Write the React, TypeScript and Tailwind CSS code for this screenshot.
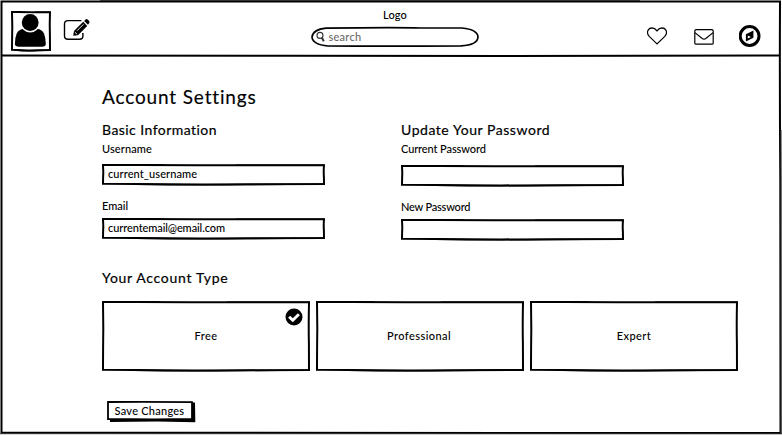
import React from "react";

type FrameProps = { w: number; h: number };

// Hand-drawn rectangle: slightly uneven strokes with short second passes on the long sides.
function SketchFrame({ w, h }: FrameProps) {
  const l = 1;
  const r = w - 1;
  const b = h - 1;
  return (
    <svg className="pointer-events-none absolute inset-0 h-full w-full overflow-visible" viewBox={`0 0 ${w} ${h}`} fill="none" stroke="#000">
      <path d={`M${l} 1 Q${w * 0.3} 0.8 ${w * 0.5} 1.3 L${r} 1.2 Q${r - 0.5} ${h * 0.35} ${r - 0.1} ${h * 0.6} L${r} ${b} Q${w * 0.7} ${b + 0.1} ${w * 0.45} ${b + 0.4} L${l} ${b - 0.2} Q${l + 0.1} ${h * 0.6} ${l + 0.3} ${h * 0.4} L${l} 1Z`} strokeWidth={2} />
      <path d={`M${l - 0.8} 0.8 L${w * 0.28} 0.9 M${w * 0.6} 1.3 L${r + 0.6} 1.2 M${w * 0.15} ${b + 0.2} Q${w * 0.4} ${b + 1.1} ${w * 0.65} ${b + 0.5} L${r + 0.5} ${b}`} strokeWidth={1.5} />
    </svg>
  );
}

function Field({ label, value, labelClass, valueClass = "", gap }: { label: string; value?: string; labelClass: string; valueClass?: string; gap: string }) {
  return (
    <label className={`flex flex-col ${gap}`}>
      <span className={`h-[14px] text-[11px] leading-[14px] whitespace-nowrap ${labelClass}`}>{label}</span>
      <span className="relative flex h-[21px] w-[223px] items-center pl-[6px] text-[11px]">
        <SketchFrame w={223} h={21} />
        {value && <span className={`relative -top-px leading-[14px] ${valueClass}`}>{value}</span>}
      </span>
    </label>
  );
}

function Plan({ name, selected, tracking }: { name: string; selected?: boolean; tracking: string }) {
  return (
    <div className="relative flex h-[70px] w-[208px] items-center justify-center text-[11px]">
      <SketchFrame w={208} h={70} />
      <span className={tracking}>{name}</span>
      {selected && (
        <svg className="absolute top-[7px] right-[7px] h-[18px] w-[18px]" viewBox="0 0 18 18">
          <circle cx="9" cy="9" r="8.5" fill="#000" />
          <path d="M4.1 8.7 7.8 12.3 13.9 6.2" fill="none" stroke="#fff" strokeWidth="2.9" />
        </svg>
      )}
    </div>
  );
}

function Header() {
  return (
    <header className="relative flex h-[57px] w-full">
      <div className="flex w-[300px] gap-[12px] pt-[11px] pl-[11px]">
        <div className="relative h-[40px] w-[40px]">
          <SketchFrame w={40} h={40} />
          <svg className="relative h-[40px] w-[40px]" viewBox="0 0 40 40">
            <path d="M12.5 18 Q8 18 5.7 22.5 Q3.8 27 3.9 33 Q4 35.8 8 35.8 H31 Q34.7 35.8 34.8 33 Q34.8 27 33 22.5 Q30.5 18 26.5 18Z" />
            <ellipse cx="19.2" cy="12" rx="9.6" ry="9.5" fill="#fff" />
            <ellipse cx="19.2" cy="11.6" rx="8.4" ry="8.5" />
          </svg>
        </div>
        <svg className="mt-[7px] h-[24px] w-[28px]" viewBox="0 0 28 24" fill="none" stroke="#000">
          <path d="M18.4 2.6 H5 Q1.5 2.6 1.5 6 V18 Q1.5 21.2 5 21.2 H16.5 Q19.9 21.2 19.9 18 V15" strokeWidth="1.4" />
          <path d="M10.2 17.8 11 13 20.2 3.8 24.2 7.9 15 17.2Z M21.1 3 22.9 1.3 Q23.8.7 24.6 1.4 L26.2 3 Q27 4 26.2 5 L25 6.8Z" fill="#000" stroke="none" />
          <path d="M14 12.8 20.4 6.4 M11.8 14.1 14.2 16.4" stroke="#fff" strokeWidth=".9" />
        </svg>
      </div>
      <div className="flex w-[190px] flex-col items-center pt-[8px]">
        <span className="h-[14px] text-[11px] leading-[14px] tracking-[0.15px]">Logo</span>
        <div className="relative mt-[5px] flex h-[20px] w-[169px] items-center pl-[5px]">
          <svg className="absolute inset-0 h-full w-full overflow-visible" viewBox="0 0 169 20" fill="none" stroke="#000">
            <path d="M15 1.2 Q80 .3 110 1 L151 1 Q166.5 2.5 167 10 Q166.5 18 150 18.9 Q80 19.4 17 19 Q1.5 17.5 1 10 Q2 2.5 15 1.2Z" strokeWidth="1.7" />
          </svg>
          <svg className="relative h-[12px] w-[11px]" viewBox="0 0 11 12" fill="none" stroke="#333">
            <circle cx="4" cy="4.4" r="3" strokeWidth="1.1" />
            <path d="M5.9 6.8 7.8 10.2" strokeWidth="2" />
          </svg>
          <span className="relative ml-[2px] text-[11px] leading-[14px] tracking-[0.25px] text-[#6b6b6b]">search</span>
        </div>
      </div>
      <div className="flex flex-1 items-center justify-end gap-[27px] pt-[15px] pr-[21px]">
        <svg className="h-[18px] w-[20px]" viewBox="0 0 20 18" fill="none" stroke="#000" strokeWidth="1.2">
          <path d="M10 16.9 2.2 9.4 Q-.2 6.8 .8 3.8 Q2 1 5 .9 Q7.8.9 10 3.9 Q12.2.9 15 .9 Q18 1 19.2 3.8 Q20.2 6.8 17.8 9.4Z" />
        </svg>
        <svg className="mr-px h-[17px] w-[20px]" viewBox="0 0 20 17" fill="none" stroke="#000" strokeWidth="1.2">
          <rect x=".8" y="1.6" width="18.4" height="14.6" rx="1.3" />
          <path d="M.9 4.6 8.2 10.4 Q10 11.7 11.8 10.4 L19.1 4.6" />
        </svg>
        <svg className="-ml-[3px] h-[22px] w-[22px]" viewBox="0 0 22 22">
          <circle cx="10.6" cy="11" r="9.4" fill="none" stroke="#000" strokeWidth="3" />
          <path d="M6.9 9.2 14.4 5.4 V12.7 L6.9 16.5Z M8.8 10.5 V13.6 L12 11.9Z" fillRule="evenodd" />
        </svg>
      </div>
      <svg className="absolute inset-x-0 bottom-0 h-[2px] w-full overflow-visible" viewBox="0 0 782 2" fill="none" stroke="#000">
        <path d="M2 .4 L290 .8 510 .9 780 .4" strokeWidth="2" />
      </svg>
    </header>
  );
}

export default function App() {
  return (
    <div className="relative h-[435px] w-[782px] overflow-hidden bg-white font-['Lato','Liberation_Sans',sans-serif] font-medium text-black">
      <Header />
      <main className="flex flex-col pt-[28px] pl-[102px]">
        <h1 className="h-[24px] text-[19px] leading-[24px] font-normal tracking-[0.85px] [-webkit-text-stroke:0.15px_#000]">Account Settings</h1>
        <div className="mt-[13px] flex gap-[76px]">
          <section className="flex w-[223px] flex-col">
            <h2 className="h-[18px] text-[14px] leading-[16px] font-normal tracking-[0.45px] [-webkit-text-stroke:0.2px_#000]">Basic Information</h2>
            <div className="mt-[2px] flex flex-col gap-[14px]">
              <Field label="Username" value="current_username" labelClass="tracking-[0.1px]" valueClass="tracking-[0.1px]" gap="gap-[8px]" />
              <Field label="Email" value="currentemail@email.com" labelClass="tracking-[0px]" valueClass="tracking-[-0.09px]" gap="gap-[5px]" />
            </div>
          </section>
          <section className="flex w-[223px] flex-col">
            <h2 className="h-[18px] text-[14px] leading-[16px] font-normal tracking-[0.55px] [-webkit-text-stroke:0.2px_#000]">Update Your Password</h2>
            <div className="mt-[2px] flex flex-col">
              <Field label="Current Password" labelClass="tracking-[-0.1px]" gap="gap-[8.5px]" />
              <div className="mt-[14.5px]">
                <Field label="New Password" labelClass="tracking-[-0.2px]" gap="gap-[4.5px]" />
              </div>
            </div>
          </section>
        </div>
        <h2 className="mt-[28px] h-[20px] text-[14px] leading-[20px] font-normal tracking-[0.7px] [-webkit-text-stroke:0.2px_#000]">Your Account Type</h2>
        <div className="mt-[13.5px] flex gap-[6px]">
          <Plan name="Free" selected tracking="tracking-[0.4px]" />
          <Plan name="Professional" tracking="mr-[2px] tracking-[0.45px]" />
          <Plan name="Expert" tracking="tracking-[0.4px]" />
        </div>
        <button className="relative mt-[30px] ml-[5px] flex h-[20px] w-[87px] items-center justify-center text-[11px]">
          <svg className="absolute inset-0 h-full w-full overflow-visible" viewBox="0 0 87 20">
            <path d="M3 2 L88 1.5 88.3 21.3 50 20.6 3 21Z" />
            <path d="M1 1 Q40 .5 85 1.2 L85 18 Q50 18.6 1 18Z" fill="#fff" stroke="#000" strokeWidth="1.8" />
          </svg>
          <span className="relative mr-[2px] tracking-[0.25px]">Save Changes</span>
        </button>
      </main>
      <svg className="pointer-events-none absolute inset-0 h-full w-full" viewBox="0 0 782 435" fill="none" stroke="#000">
        <path d="M1.5 1.5 L780 1.5 Q779.6 90 780.3 180 L780.5 433 Q390 432.7 1.5 432.7 Q1 200 1.5 1.5Z" strokeWidth="2" />
        <path d="M781 130 L781 434 M0 433.7 L782 433.8 M100 .5 L640 .5" stroke="#333" strokeWidth="1" />
      </svg>
    </div>
  );
}
